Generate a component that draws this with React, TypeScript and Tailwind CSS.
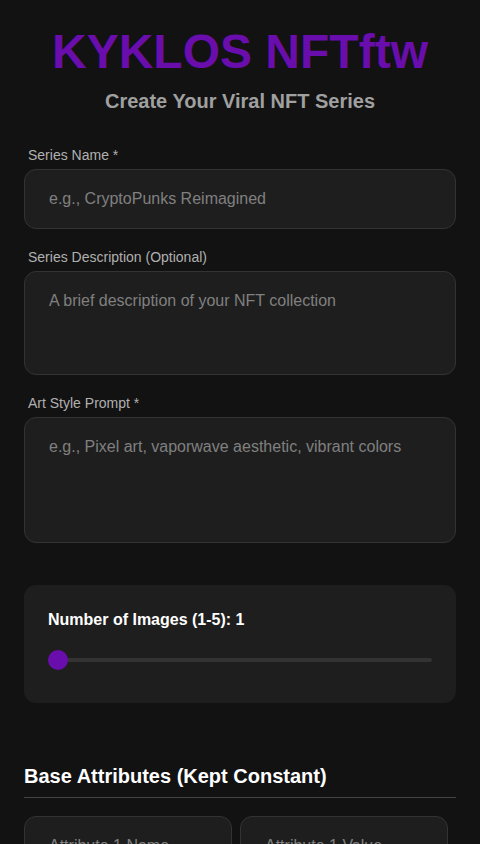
import React from "react";

export default function App() {
  const font = { fontFamily: '"Liberation Sans", Arial, sans-serif' };
  return (
    <div className="min-h-[844px] w-full bg-[#121212] text-[#e0e0e0]" style={font}>
      <div className="px-6 pt-[28px]">
        <h1 className="text-center text-[48px] font-bold leading-[48px] text-[#6a0dad]">KYKLOS NFTftw</h1>
        <h2 className="mt-[13px] text-center text-[20px] font-bold leading-[24px] text-[#a0a0a0]">Create Your Viral NFT Series</h2>

        <div className="mt-[34px]">
          <label className="block pl-[4px] text-[14px] leading-[16px] text-[#b0b0b0]">Series Name *</label>
          <input
            className="mt-[6px] block h-[60px] w-full rounded-[12px] border border-[#333333] bg-[#1e1e1e] px-[24px] text-[16px] text-[#e0e0e0] outline-none placeholder:text-[#808080]"
            style={font}
            placeholder="e.g., CryptoPunks Reimagined"
          />
        </div>

        <div className="mt-[20px]">
          <label className="block pl-[4px] text-[14px] leading-[16px] text-[#b0b0b0]">Series Description (Optional)</label>
          <textarea
            className="mt-[6px] block h-[104px] w-full resize-none rounded-[12px] border border-[#333333] bg-[#1e1e1e] px-[24px] py-[19px] text-[16px] leading-[20px] text-[#e0e0e0] outline-none placeholder:text-[#808080]"
            style={font}
            placeholder="A brief description of your NFT collection"
          />
        </div>

        <div className="mt-[20px]">
          <label className="block pl-[4px] text-[14px] leading-[16px] text-[#b0b0b0]">Art Style Prompt *</label>
          <textarea
            className="mt-[6px] block h-[126px] w-full resize-none rounded-[12px] border border-[#333333] bg-[#1e1e1e] px-[24px] py-[19px] text-[16px] leading-[20px] text-[#e0e0e0] outline-none placeholder:text-[#808080]"
            style={font}
            placeholder="e.g., Pixel art, vaporwave aesthetic, vibrant colors"
          />
        </div>

        <div className="mt-[42px] h-[118px] rounded-[12px] bg-[#1e1e1e] px-[24px] pt-[26px]">
          <div className="text-[16px] font-bold leading-[18px] text-white">Number of Images (1-5): 1</div>
          <div className="relative mt-[21px] h-[20px]">
            <div className="absolute left-0 right-0 top-[8px] h-[4px] rounded-full bg-[#333333]" />
            <div className="absolute left-0 top-0 h-[20px] w-[20px] rounded-full bg-[#6a0dad]" />
          </div>
        </div>

        <div className="mt-[61px] border-b border-[#444444] pb-[9px]">
          <h3 className="text-[20px] font-bold leading-[24px] text-white">Base Attributes (Kept Constant)</h3>
        </div>

        <div className="mt-[18px] flex gap-[8px]">
          <input
            className="block h-[60px] w-[208px] rounded-[12px] border border-[#333333] bg-[#1e1e1e] px-[24px] text-[16px] outline-none placeholder:text-[#808080]"
            style={font}
            placeholder="Attribute 1 Name"
          />
          <input
            className="block h-[60px] w-[208px] rounded-[12px] border border-[#333333] bg-[#1e1e1e] px-[24px] text-[16px] outline-none placeholder:text-[#808080]"
            style={font}
            placeholder="Attribute 1 Value"
          />
        </div>
      </div>
    </div>
  );
}
